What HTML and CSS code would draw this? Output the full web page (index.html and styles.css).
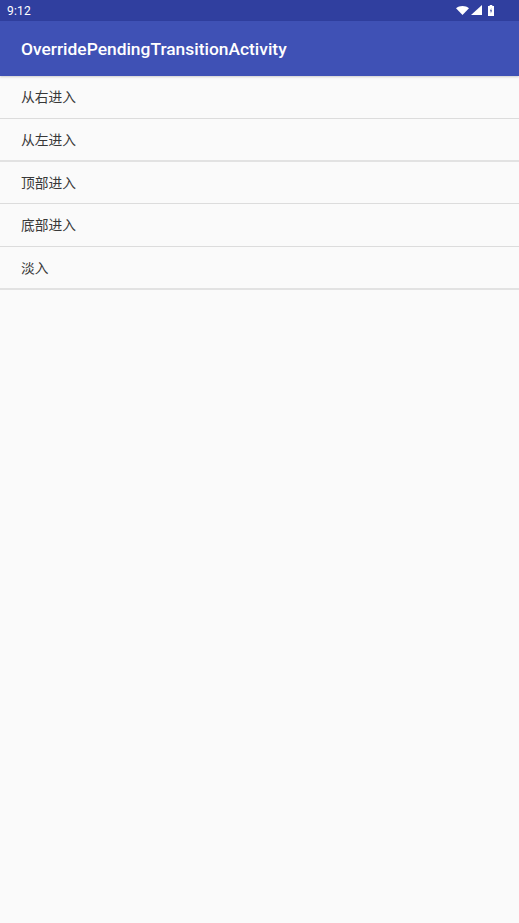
FILE: index.html
```html
<!DOCTYPE html>
<html lang="zh">
<head>
<meta charset="utf-8">
<title>OverridePendingTransitionActivity</title>
<link rel="stylesheet" href="styles.css">
</head>
<body>
<div class="status">
  <span class="time">9:12</span>
  <div class="status-icons">
    <svg width="13" height="9" viewBox="0 0 13 9"><path d="M0 2.300C1.800.8 4 0 6.500 0S11.200.8 13 2.300L6.500 9z" fill="#fff"/></svg>
    <svg width="11" height="10" viewBox="0 0 11 10"><path d="M11 0v10H0z" fill="#fff"/></svg>
    <svg class="batt" width="6" height="11" viewBox="0 0 6 11"><path fill-rule="evenodd" d="M1.700 0h2.600v1H6v10H0V1h1.700zM3.300 3 2 6.200h.8V8.500L4 5.300h-.8z" fill="#fff"/></svg>
  </div>
</div>
<header class="appbar">OverridePendingTransitionActivity</header>
<ul class="list">
  <li class="row">从右进入</li>
  <li class="row thick">从左进入</li>
  <li class="row short">顶部进入</li>
  <li class="row">底部进入</li>
  <li class="row thick">淡入</li>
</ul>
</body>
</html>
```
FILE: styles.css
```css
html, body { margin: 0; padding: 0; }
body {
  width: 519px;
  height: 923px;
  overflow: hidden;
  background: #fafafa;
  font-family: Roboto, "Noto Sans CJK SC", sans-serif;
}
.status {
  height: 21px;
  background: #303f9f;
  display: flex;
  align-items: center;
  justify-content: space-between;
  padding: 0 25px 0 7px;
  box-sizing: border-box;
  color: #fff;
}
.time { font-size: 12px; letter-spacing: 0.2px; }
.status-icons { display: flex; align-items: center; gap: 2px; margin-bottom: 1px; }
.batt { margin-left: 4px; }
.appbar {
  height: 55px;
  background: #3f51b5;
  color: #fff;
  font-size: 17.400px;
  font-weight: 500;
  display: flex;
  align-items: center;
  padding-left: 21px;
  box-shadow: 0 1px 2px rgba(0,0,0,.18);
  position: relative;
}
.list { list-style: none; margin: 0; padding: 0; }
.row {
  height: 43px;
  box-sizing: border-box;
  border-bottom: 1px solid #dcdcdc;
  padding: 0 0 2px 21px;
  display: flex;
  align-items: center;
  font-size: 13.750px;
  color: #383838;
}
.thick { border-bottom: 2px solid #e2e2e2; padding-bottom: 1px; }
.short { height: 42px; }
```
